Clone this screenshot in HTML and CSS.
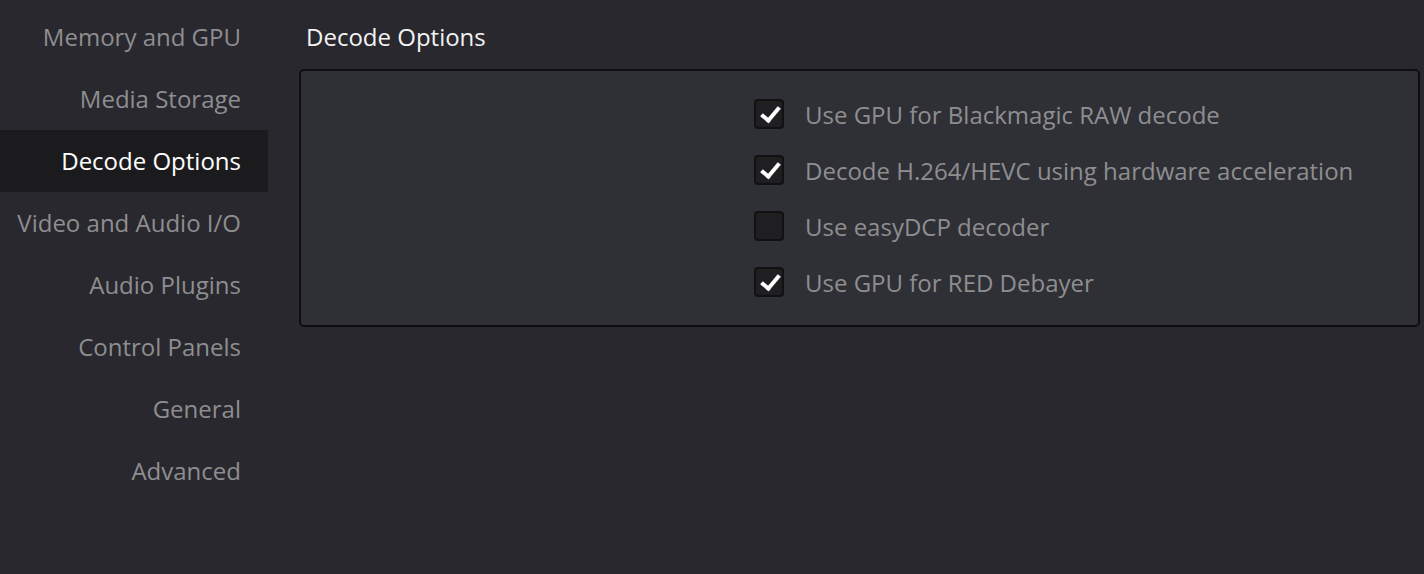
FILE: index.html
```html
<!DOCTYPE html>
<html lang="en">

<head>
    <meta charset="UTF-8">
    <meta name="viewport" content="width=device-width, initial-scale=1.0">
    <link rel="stylesheet" href="styles.css">
    <title>Preferences - Decode Options</title>
</head>

<body>
    <div class="prefs">
        <!-- left menu -->
        <ul class="menu">
            <li class="menuItem">Memory and GPU</li>
            <li class="menuItem">Media Storage</li>
            <li class="menuItem active">Decode Options</li>
            <li class="menuItem">Video and Audio I/O</li>
            <li class="menuItem">Audio Plugins</li>
            <li class="menuItem">Control Panels</li>
            <li class="menuItem">General</li>
            <li class="menuItem">Advanced</li>
        </ul>

        <!-- right side -->
        <div class="content">
            <h2 class="title">Decode Options</h2>
            <div class="box">
                <label class="option">
                    <span class="check on"></span>
                    <span>Use GPU for Blackmagic RAW decode</span>
                </label>
                <label class="option">
                    <span class="check on"></span>
                    <span>Decode H.264/HEVC using hardware acceleration</span>
                </label>
                <label class="option">
                    <span class="check"></span>
                    <span>Use easyDCP decoder</span>
                </label>
                <label class="option">
                    <span class="check on"></span>
                    <span>Use GPU for RED Debayer</span>
                </label>
            </div>
        </div>
    </div>
</body>
</html>
```

FILE: styles.css
```css
* {
    box-sizing: border-box;
}

body {
    margin: 0;
    background-color: #28282e;
    font-family: "Open Sans", "Liberation Sans", sans-serif;
    height: 574px;
    overflow: hidden;
}

.prefs {
    display: flex;
}

.menu {
    list-style: none;
    margin: 0;
    padding: 6px 0 0 0;
    width: 268px;
    flex-shrink: 0;
}

.menuItem {
    height: 62px;
    line-height: 62px;
    text-align: right;
    padding-right: 27px;
    font-size: 24px;
    color: #8e8e90;
    white-space: nowrap;
}

.menuItem.active {
    background-color: #1b1b1e;
    color: #ffffff;
}

.content {
    flex: 1;
    padding: 0 4px 0 31px;
}

.title {
    margin: 0;
    font-weight: normal;
    font-size: 24px;
    color: #f2f2f2;
    height: 69px;
    line-height: 74px;
    padding-left: 7px;
}

.box {
    border: 2px solid #0e0e10;
    border-radius: 5px;
    background-color: #2f3036;
    height: 258px;
    padding: 15px 0 0 453px;
}

.option {
    display: flex;
    align-items: center;
    height: 56px;
    font-size: 24px;
    color: #8e8e90;
    white-space: nowrap;
}

.check {
    width: 30px;
    height: 30px;
    border: 2px solid #111113;
    border-radius: 4px;
    background-color: #1f1f21;
    margin-right: 21px;
    position: relative;
    flex-shrink: 0;
}

.check.on::after {
    content: "";
    position: absolute;
    left: 9px;
    top: 2px;
    width: 7px;
    height: 15px;
    border: solid #ffffff;
    border-width: 0 4px 4px 0;
    transform: rotate(40deg);
}
```
